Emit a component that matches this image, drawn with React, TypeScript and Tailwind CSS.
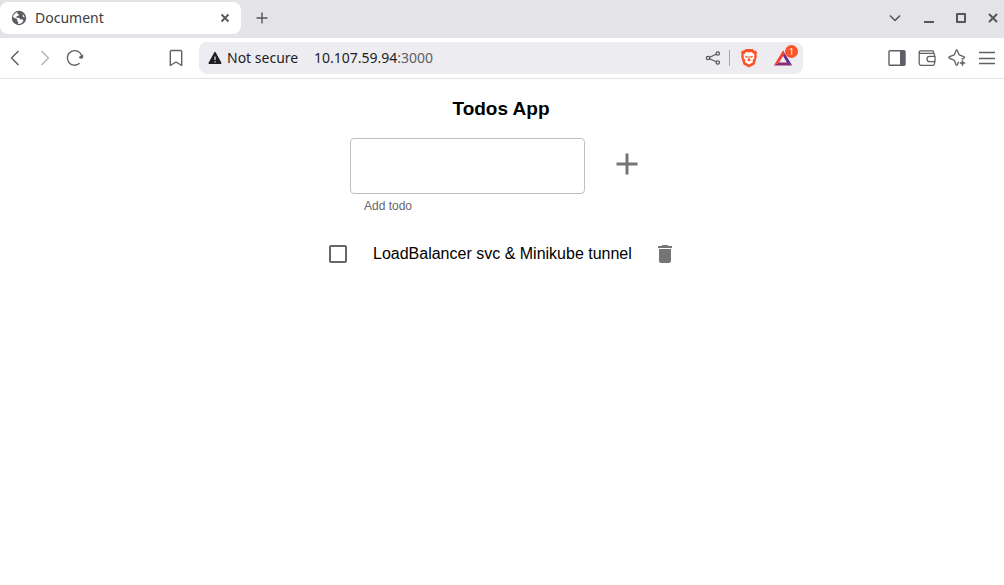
import { useState } from "react";
import type { ReactNode } from "react";

function IconButton({ label, children, className = "" }: { label: string; children: ReactNode; className?: string }) {
  return (
    <button type="button" aria-label={label} className={`flex shrink-0 items-center justify-center ${className}`}>
      {children}
    </button>
  );
}

function Line({ d, width = 1.4 }: { d: string; width?: number }) {
  return (
    <svg className="size-5" viewBox="0 0 20 20" fill="none" stroke="currentColor" strokeWidth={width} strokeLinejoin="round">
      <path d={d} />
    </svg>
  );
}

function GlobeIcon() {
  return (
    <svg className="size-[18px]" viewBox="0 0 18 18">
      <circle cx="9" cy="9" r="7.2" fill="#5b5c62" />
      <path d="M3 8.200C3.400 5.600 5.400 3.600 7.800 3.100L7 4.600l1.800.6-.4 1.700-2 .4.2 1.500 2.600.3 1.300 1.500 2-.3.9 1.200C12.600 13.600 11 14.800 9 15l-1-.1.4-1.600-1.300-1.300.2-1.900-2-.9z" fill="white" />
      <path d="M12.500 5.200l1.700 1.500.5 1.700-1.700-.6z" fill="white" />
    </svg>
  );
}

function BraveIcon() {
  return (
    <svg className="h-5 w-[18px]" viewBox="0 0 18 20">
      <path d="M5.400 1h7.200l1.600 1.700 1.600-.1 1.200 2-.6 1.900.5 1.700-2 7.300q-.3 1-1.200 1.600L9 19.500l-4.700-2.400q-.9-.6-1.200-1.600L1.100 8.200l.5-1.700L1 4.600l1.200-2 1.600.1z" fill="#fb542b" />
      <path d="M9 4.600l2.600-.5 2.900 2.700-.4 1.600.4 1.200-1.900 2.900.3 1.700L9 16.600l-3.900-2.400.3-1.700-1.900-2.900.4-1.200-.4-1.600 2.900-2.700z" fill="white" />
      <path d="M5 7.800l3 .7-.4 1.300-2-.3zM13 7.800l-3 .7.4 1.300 2-.3zM8.600 8h.8l.3 3.300 1.500.8L9 13.500l-2.200-1.400 1.500-.8z" fill="#fb542b" />
    </svg>
  );
}

function TabStrip() {
  return (
    <header className="flex h-[38px] items-center bg-[#e3e3e8] pb-0.5 text-[#55565c]">
      <div className="flex h-8 w-[241px] shrink-0 items-center rounded-lg bg-white pr-1.5 pl-2.5">
        <GlobeIcon />
        <span className="ml-[7px] flex-1 text-sm text-[#3c3c42]">Document</span>
        <IconButton label="Close tab" className="size-5">
          <Line d="M6.500 6.500l7 7M13.500 6.500l-7 7" width={1.8} />
        </IconButton>
      </div>
      <IconButton label="New tab" className="ml-[11px] size-5">
        <Line d="M10 4.500v11M4.500 10h11" />
      </IconButton>
      <div className="ml-auto flex items-center">
        <IconButton label="Search tabs" className="mr-3.5 size-5">
          <Line d="M5 7.500l5 5 5-5" width={1.6} />
        </IconButton>
        <IconButton label="Minimize" className="mr-3 size-5">
          <Line d="M5 14h10" width={2} />
        </IconButton>
        <IconButton label="Maximize" className="mr-3 size-5">
          <Line d="M6 6h8v8H6z" width={2} />
        </IconButton>
        <IconButton label="Close window" className="mr-px size-5">
          <Line d="M6 6l8 8M14 6l-8 8" width={2} />
        </IconButton>
      </div>
    </header>
  );
}

function AddressBar() {
  return (
    <div className="flex h-8 min-w-0 flex-1 items-center rounded-lg bg-[#ededf1] pl-1.5 text-[#1d1d22]">
      <svg className="size-5 shrink-0" viewBox="0 0 20 20">
        <path d="M10 4.600L15.800 15.200H4.200z" fill="currentColor" stroke="currentColor" strokeWidth="1.4" strokeLinejoin="round" />
        <path d="M10 8.500v3.500M10 13.200v1.400" stroke="#ededf1" strokeWidth="1.2" />
      </svg>
      <span className="ml-0.5 w-[87px] shrink-0 text-sm whitespace-nowrap">Not secure</span>
      <span className="flex-1 text-sm">
        10.107.59.94<span className="text-[#5d5d64]">:3000</span>
      </span>
      <IconButton label="Share" className="mr-1.5 size-5 text-[#55565c]">
        <svg className="size-5" viewBox="0 0 20 20" fill="none" stroke="currentColor" strokeWidth="1.2">
          <circle cx="5" cy="10" r="1.700" />
          <circle cx="14.800" cy="5.500" r="1.700" />
          <circle cx="14.800" cy="14.500" r="1.700" />
          <path d="M6.600 9.200l6.600-3M6.600 10.800l6.600 3" />
        </svg>
      </IconButton>
      <span className="h-4 w-px bg-[#a6a6ac]" />
      <IconButton label="Brave Shields" className="ml-[9px] size-5">
        <BraveIcon />
      </IconButton>
      <IconButton label="Brave Rewards" className="relative mr-2.5 ml-3.5 size-5">
        <svg className="size-5" viewBox="0 0 20 20">
          <path d="M10 2.500L19.200 17.500 14 14.800 9.900 7.500z" fill="#662d91" />
          <path d="M19.200 17.500H.8l5.200-3h8.500z" fill="#8a2a78" />
          <path d="M10 2.500L.8 17.500l5.300-3L10.200 8l1.800-2.200z" fill="#f0452e" />
        </svg>
        <span className="absolute -top-[3px] -right-[5px] flex size-[13px] items-center justify-center rounded-full bg-[#fb542b] text-[9px] text-white">
          1
        </span>
      </IconButton>
    </div>
  );
}

function Toolbar() {
  return (
    <nav className="flex h-[41px] items-center border-b border-[#e3e3e8] bg-white pr-[7px] pl-[5px] text-[#5f6066]">
      <IconButton label="Back" className="size-5">
        <Line d="M13.500 3L6.500 10l7 7" width={1.5} />
      </IconButton>
      <IconButton label="Forward" className="ml-2.5 size-5 text-[#b4b4b9]">
        <Line d="M6.500 3l7 7-7 7" width={1.5} />
      </IconButton>
      <IconButton label="Reload" className="ml-2.5 size-5">
        <svg className="size-5" viewBox="0 0 20 20" fill="none">
          <path d="M14.600 15.300A7.300 7.300 0 1 1 16.600 7.600" stroke="currentColor" strokeWidth="1.4" />
          <path d="M18.200 6.200v2.800q0 1.800-1.800 1.800-2.400 0-2.600-1.700z" fill="currentColor" />
        </svg>
      </IconButton>
      <IconButton label="Bookmark" className="mr-[13px] ml-[81px] size-5">
        <Line d="M5.500 2.500h9q1.200 0 1.200 1.200v13.800L10 14l-5.700 3.500V3.700q0-1.200 1.200-1.200z" />
      </IconButton>
      <AddressBar />
      <div className="ml-[84px] flex items-center gap-2.5">
        <IconButton label="Sidebar" className="size-5">
          <svg className="size-5" viewBox="0 0 20 20">
            <rect x="2" y="2.700" width="16" height="14.600" rx="1" fill="none" stroke="currentColor" strokeWidth="1.4" />
            <path d="M13 3h5v14h-5z" fill="currentColor" />
          </svg>
        </IconButton>
        <IconButton label="Wallet" className="size-5">
          <Line d="M17.500 8V6.500q0-1.200-1.200-1.200H3.500q-1.300 0-1.300-1.200 0-1.200 1.300-1.200h12q1 0 1 1v1.400M2.200 4v11.500q0 1.800 1.800 1.800h12q1.500 0 1.500-1.500V14M18 8.300h-5.300a2.700 2.700 0 0 0 0 5.400H18z" width={1.3} />
        </IconButton>
        <IconButton label="Leo AI" className="size-5">
          <svg className="size-5" viewBox="0 0 20 20" fill="none" stroke="currentColor" strokeLinejoin="round">
            <path d="M11.500 13.800l-1 2.600q-.8 1.800-1.600 0L7.600 13q-.3-.8-1.100-1.100L2.600 10.300q-1.600-.8 0-1.600L6.500 7.200q.8-.3 1.100-1.100l1.500-3.700q.6-1.200 1.200 0l1.400 3.700q.3.800 1.100 1.100l3.900 1.500q1.600.8 0 1.600l-2.100.9" strokeWidth="1.300" />
            <path d="M15.500 12.300v5.400M12.800 15h5.400" strokeWidth="1.600" />
          </svg>
        </IconButton>
        <IconButton label="Menu" className="size-5">
          <Line d="M2 4.500h16M2 10.500h16M2 15.500h16" />
        </IconButton>
      </div>
    </nav>
  );
}

function TodosApp() {
  const [draft, setDraft] = useState("");
  const [done, setDone] = useState(false);
  return (
    <main className="flex flex-col items-center pt-[18px] pr-0.5">
      <h1 className="text-[19px] leading-6 font-bold text-black">Todos App</h1>
      <div className="mt-[17px] flex items-start gap-4">
        <div className="flex flex-col">
          <input
            id="todo"
            type="text"
            value={draft}
            onChange={(e) => setDraft(e.target.value)}
            className="h-14 w-[235px] rounded border border-[#c0c0c0] px-3.5 text-base outline-none"
          />
          <label htmlFor="todo" className="mt-0.5 ml-3.5 text-xs leading-5 text-[#666666]">
            Add todo
          </label>
        </div>
        <IconButton label="Add" className="size-[51px] text-[#757575]">
          <svg className="size-9" viewBox="0 0 24 24" fill="currentColor">
            <path d="M19 13h-6v6h-2v-6H5v-2h6V5h2v6h6v2z" />
          </svg>
        </IconButton>
      </div>
      <ul className="mt-[17px]">
        <li className="flex items-center">
          <input
            id="todo-1"
            type="checkbox"
            checked={done}
            onChange={() => setDone(!done)}
            className="m-3 size-[18px] appearance-none rounded-[2px] border-2 border-[#666666] checked:bg-[#1976d2]"
          />
          <label htmlFor="todo-1" className="ml-3.5 min-w-[264px] text-base text-black">
            LoadBalancer svc &amp; Minikube tunnel
          </label>
          <IconButton label="Delete" className="ml-2 size-10 text-[#757575]">
            <svg className="size-6" viewBox="0 0 24 24" fill="currentColor">
              <path d="M6 19c0 1.100.9 2 2 2h8c1.100 0 2-.9 2-2V7H6v12zM19 4h-3.500l-1-1h-5l-1 1H5v2h14V4z" />
            </svg>
          </IconButton>
        </li>
      </ul>
    </main>
  );
}

export default function App() {
  return (
    <div className="min-h-screen bg-white font-['Liberation_Sans',sans-serif]">
      <div className="font-['Noto_Sans',sans-serif]">
        <TabStrip />
        <Toolbar />
      </div>
      <TodosApp />
    </div>
  );
}
